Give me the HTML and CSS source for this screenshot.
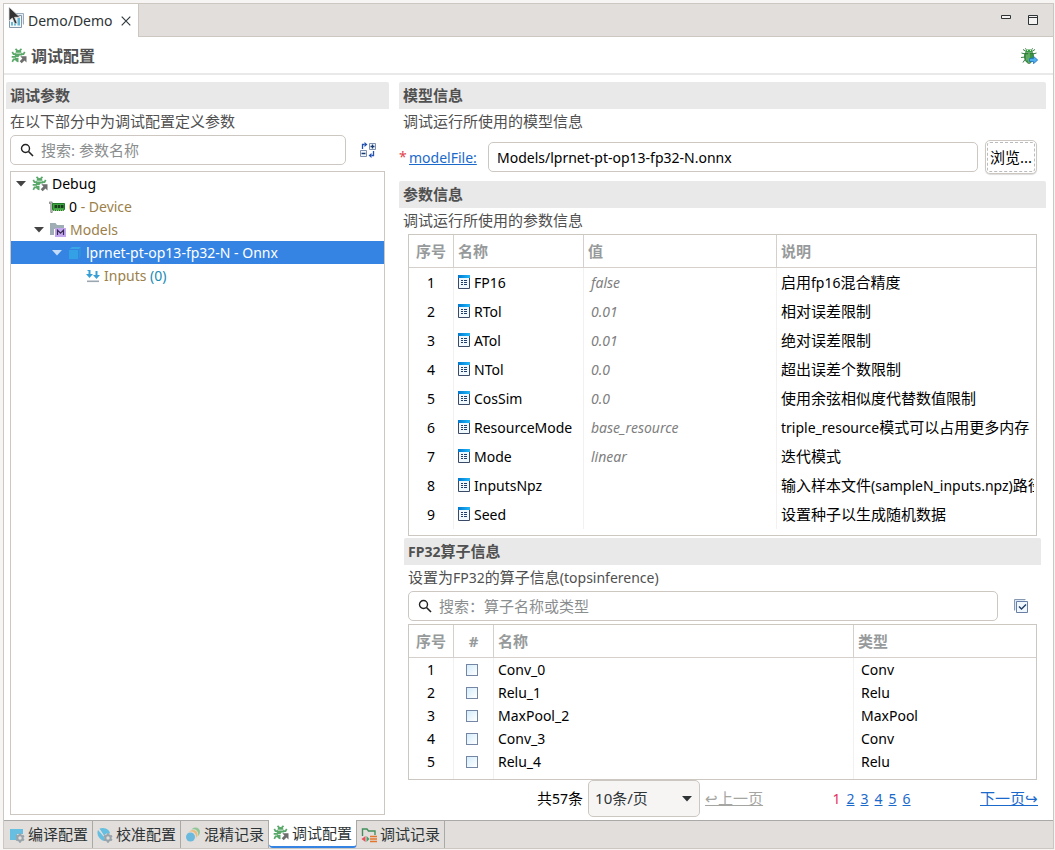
FILE: index.html
```html
<!DOCTYPE html>
<html lang="zh-CN">
<head>
<meta charset="utf-8">
<title>Demo/Demo</title>
<link rel="stylesheet" href="styles.css">
</head>
<body>
<svg class="defs" aria-hidden="true">
  <symbol id="bug" viewBox="0 0 16 16">
    <path d="M4.500 4.800C4.500 3 5.800 2 7.500 2s3 1 3 2.800z" fill="#59a869"/>
    <path d="M3.800 5.500h7.400v2H8.500L7.500 9H3.800z" fill="#59a869"/>
    <path d="M3.800 9.700h3.700v4.600C5.400 14.300 3.900 12.500 3.800 9.700z" fill="#59a869"/>
    <path d="M4.500.800l2 2M10.500.800l-2 2M1.300 3.800l1.200 2.400H5M13.700 3.800l-1.200 2.400H10M.7 8.800H5M1.300 13.800l1.200-2.400h2.500" fill="none" stroke="#59a869" stroke-width="1.700"/>
    <path d="M9.300 8.300h6.200v6.200l-2-2L10.700 15.300 8.700 13.300 11.400 10.500z" fill="#6e6e6e"/>
  </symbol>
  <symbol id="search" viewBox="0 0 14 14">
    <circle cx="5.500" cy="5.500" r="4" fill="none" stroke="#222" stroke-width="1.400"/>
    <path d="M8.500 8.500L13 13" stroke="#222" stroke-width="1.600"/>
  </symbol>
  <symbol id="down" viewBox="0 0 10 6"><path d="M0 0h10L5 5.500z" fill="currentColor"/></symbol>
  <linearGradient id="bar"><stop offset="0" stop-color="#0078d0"/><stop offset="1" stop-color="#20b8f8"/></linearGradient>
  <symbol id="prop" viewBox="0 0 12 14">
    <path d="M.5.500h11v13H.5z" fill="#eef8fd" stroke="#3a4a66"/>
    <path d="M0 0h12v3H0z" fill="url(#bar)"/>
    <path d="M3 5.500h2M6 5.500h3M3 7.500h2M6 7.500h3M3 9.500h2M6 9.500h3" stroke="#1f3d68" stroke-width="1.200"/>
  </symbol>
  <symbol id="gear" viewBox="0 0 10 10">
    <circle cx="5" cy="5" r="2.700" fill="none" stroke="#98a4ab" stroke-width="2"/>
    <path d="M5 .3v2M5 7.700v2M.9 2.700l1.700 1M7.400 6.300l1.700 1M.9 7.300l1.700-1M7.400 3.700l1.700-1" stroke="#98a4ab" stroke-width="1.800"/>
  </symbol>
</svg>

<div class="window">
  <header class="editor-tabs">
    <div class="editor-tab">
      <span class="tab-icon">
        <svg width="15" height="15" viewBox="0 0 15 15"><path d="M3.500.500h11v11" fill="#e8eef3" stroke="#9aabba"/><path d="M.5 2.500h12v12H.5z" fill="#f2f7fa" stroke="#8397a8"/><path d="M2 12.500V9h2v3.500zM5 12.500V7h2v5.500zM8.500 12.500V5h2.500v7.500z" fill="#64b7d5"/></svg>
        <svg class="pointer" width="15" height="20" viewBox="0 0 15 20"><path d="M1 1v14l3.300-3 2.600 6 2.300-1-2.600-5.700H12z" fill="#333" stroke="#ddd" stroke-width=".8"/></svg>
      </span>
      <span class="tab-name">Demo/Demo</span>
      <button class="icon-btn" aria-label="关闭"><svg width="10" height="10" viewBox="0 0 10 10"><path d="M.7.700l8.600 8.600M9.300.700L.7 9.300" stroke="#333b40" stroke-width="1.200"/></svg></button>
    </div>
    <div class="window-buttons">
      <button class="icon-btn" aria-label="最小化"><svg width="10" height="10" viewBox="0 0 10 10"><path d="M.5.500h9v3h-9z" fill="#f4f3f2" stroke="#2e3436"/></svg></button>
      <button class="icon-btn" aria-label="最大化"><svg width="10" height="10" viewBox="0 0 10 10"><path d="M.5.500h9v9h-9zM.5 2.500h9" fill="#f4f3f2" stroke="#2e3436"/></svg></button>
    </div>
  </header>

  <div class="form-head">
    <svg width="16" height="16"><use href="#bug"/></svg>
    <h1>调试配置</h1>
    <button class="icon-btn run" aria-label="调试">
      <svg width="17" height="16" viewBox="0 0 17 16"><path d="M4.500 3L2 1.500M11.500 3L14 1.500M4 6L.5 5M12 6l3.500-1M4 9L0 9.500M4 11.500L2 14.500M5 1.500L4.500.300M11 1.500l.5-1.200" stroke="#397d42" fill="none"/><path d="M5 1.500h6l1 3H4z" fill="#399a44"/><path d="M4 5h8c1 4 .5 9-4 10.500C3.500 14 3 9 4 5z" fill="#3b9444" stroke="#23672c" stroke-width=".8"/><path d="M8 5v10M6 6.500v6" stroke="#8ccb84" stroke-width=".9"/><path d="M6 2.500h1M9 2.500h1" stroke="#d8f1d2"/><path d="M8.500 10.500h4V8.300L16.700 12l-4.200 3.700v-2.200h-4z" fill="#4fb0ee" stroke="#1c72bd" stroke-width=".8"/></svg>
    </button>
  </div>

  <main class="columns">
    <section class="pane">
      <h2>调试参数</h2>
      <p class="desc">在以下部分中为调试配置定义参数</p>
      <div class="search-row tree-search">
        <label class="search-box"><svg width="14" height="14"><use href="#search"/></svg><input type="search" placeholder="搜索: 参数名称" aria-label="搜索参数名称"></label>
        <button class="icon-btn" aria-label="展开或折叠"><svg width="16" height="16" viewBox="0 0 16 16"><path d="M9.500 1.500h6v6h-6zM.5 8.500h6v6h-6z" fill="#f3f8fd" stroke="#7f8fad"/><path d="M10.500 4.500h4M12.500 2.500v4M1.500 11.500h4" stroke="#163b70" stroke-width="1.300"/><path d="M2.500 7V2.500h2M13.500 9v4.500h-2" fill="none" stroke="#2351b0" stroke-width="1.300"/><path d="M4.500 0v5L7.500 2.500zM11.500 11v5l-3-2.500z" fill="#2351b0"/></svg></button>
      </div>
      <ul class="tree en">
        <li class="lv0"><svg class="arrow" width="10" height="6"><use href="#down"/></svg><svg width="16" height="16"><use href="#bug"/></svg><span>Debug</span></li>
        <li class="lv1 leaf"><svg width="16" height="14" viewBox="0 0 16 14"><path d="M.3 2h2.900v10.500H1.800V3.500H.3z" fill="#d9d9d9" stroke="#777" stroke-width=".8"/><path d="M3.500 3.500h12v6h-1v1h-10v-1h-1z" fill="#3fa33f" stroke="#207a28"/><path d="M5.500 5h2.500v3H5.500zM8.700 5h2.600v3H8.700zM12 5h2.500v3H12z" fill="#183c1b"/><path d="M5 10.300h9" stroke="#a9d98e" stroke-dasharray="1 1"/></svg><span>0<em> - Device</em></span></li>
        <li class="lv1"><svg class="arrow" width="10" height="6"><use href="#down"/></svg><svg width="16" height="15" viewBox="0 0 16 15"><path d="M0 1h5.500l1.500 2h7v4H4v6H0z" fill="#9fadb5"/><path d="M5 6h11v9H5z" fill="#c3a7ee"/><path d="M7.500 13V8.200l3 3 3-3V13" fill="none" stroke="#3a2b55" stroke-width="1.200"/></svg><span><em>Models</em></span></li>
        <li class="lv2 selected"><svg class="arrow" width="10" height="6"><use href="#down"/></svg><svg width="14" height="14" viewBox="0 0 14 14"><path d="M1 4h9v9H1z" fill="#34a0e6"/><path d="M1.500 3L4 1h9l-2 2z" fill="#39a6e6"/><path d="M11 4l2-2.500V10l-2 2.500z" fill="#2b93dc"/></svg><span>lprnet-pt-op13-fp32-N - Onnx</span></li>
        <li class="lv3 leaf"><svg width="14" height="14" viewBox="0 0 14 14"><path d="M3.500 1v5M10.500 2v5" stroke="#389fd6" stroke-width="2"/><path d="M1.500 1.500h2" stroke="#389fd6"/><path d="M0 5h7L3.500 9zM7 6h7l-3.500 4z" fill="#389fd6"/><path d="M1 12.300h12" stroke="#9aa7b0" stroke-width="1.600"/></svg><span><em>Inputs</em> <b>(0)</b></span></li>
      </ul>
    </section>

    <section class="pane">
      <h2>模型信息</h2>
      <p class="desc">调试运行所使用的模型信息</p>
      <div class="model-row">
        <span class="required">*</span>
        <a class="en" href="#model-file" id="model-label">modelFile:</a>
        <input class="en" id="model-file" type="text" value="Models/lprnet-pt-op13-fp32-N.onnx" aria-labelledby="model-label">
        <button class="browse"><span>浏览...</span></button>
      </div>

      <h2>参数信息</h2>
      <p class="desc">调试运行所使用的参数信息</p>
      <div class="table-box params">
        <table>
          <colgroup><col class="c-index"><col class="c-name"><col class="c-value"><col></colgroup>
          <thead><tr><th>序号</th><th>名称</th><th>值</th><th>说明</th></tr></thead>
          <tbody>
            <tr><td>1</td><td><svg width="12" height="14"><use href="#prop"/></svg>FP16</td><td>false</td><td>启用<span class="en">fp16</span>混合精度</td></tr>
            <tr><td>2</td><td><svg width="12" height="14"><use href="#prop"/></svg>RTol</td><td>0.01</td><td>相对误差限制</td></tr>
            <tr><td>3</td><td><svg width="12" height="14"><use href="#prop"/></svg>ATol</td><td>0.01</td><td>绝对误差限制</td></tr>
            <tr><td>4</td><td><svg width="12" height="14"><use href="#prop"/></svg>NTol</td><td>0.0</td><td>超出误差个数限制</td></tr>
            <tr><td>5</td><td><svg width="12" height="14"><use href="#prop"/></svg>CosSim</td><td>0.0</td><td>使用余弦相似度代替数值限制</td></tr>
            <tr><td>6</td><td><svg width="12" height="14"><use href="#prop"/></svg>ResourceMode</td><td>base_resource</td><td><span class="en">triple_resource</span>模式可以占用更多内存</td></tr>
            <tr><td>7</td><td><svg width="12" height="14"><use href="#prop"/></svg>Mode</td><td>linear</td><td>迭代模式</td></tr>
            <tr><td>8</td><td><svg width="12" height="14"><use href="#prop"/></svg>InputsNpz</td><td></td><td>输入样本文件<span class="en">(sampleN_inputs.npz)</span>路径</td></tr>
            <tr><td>9</td><td><svg width="12" height="14"><use href="#prop"/></svg>Seed</td><td></td><td>设置种子以生成随机数据</td></tr>
          </tbody>
        </table>
      </div>

      <div class="operators">
        <h2><span class="en">FP32</span>算子信息</h2>
        <p class="desc">设置为<span class="en">FP32</span>的算子信息<span class="en">(topsinference)</span></p>
        <div class="search-row op-search">
          <label class="search-box"><svg width="14" height="14"><use href="#search"/></svg><input type="search" placeholder="搜索：算子名称或类型" aria-label="搜索算子"></label>
          <button class="icon-btn" aria-label="全选"><svg width="14" height="14" viewBox="0 0 14 14"><path d="M.5 11.500V.500h11" fill="none" stroke="#8798b3"/><path d="M1 1h10v10H1z" fill="#dbe8f5"/><path d="M2.500 2.500h11v11h-11z" fill="#f0f7fd" stroke="#6a7fa3"/><path d="M5 7.500l2.500 2.500L12 5.500" fill="none" stroke="#223f66" stroke-width="1.400"/></svg></button>
        </div>
        <div class="table-box ops">
          <table>
            <colgroup><col class="c-index"><col class="c-check"><col><col class="c-type"></colgroup>
            <thead><tr><th>序号</th><th>#</th><th>名称</th><th>类型</th></tr></thead>
            <tbody>
              <tr><td>1</td><td><input type="checkbox" aria-label="Conv_0"></td><td>Conv_0</td><td>Conv</td></tr>
              <tr><td>2</td><td><input type="checkbox" aria-label="Relu_1"></td><td>Relu_1</td><td>Relu</td></tr>
              <tr><td>3</td><td><input type="checkbox" aria-label="MaxPool_2"></td><td>MaxPool_2</td><td>MaxPool</td></tr>
              <tr><td>4</td><td><input type="checkbox" aria-label="Conv_3"></td><td>Conv_3</td><td>Conv</td></tr>
              <tr><td>5</td><td><input type="checkbox" aria-label="Relu_4"></td><td>Relu_4</td><td>Relu</td></tr>
              <tr><td></td><td><input type="checkbox" aria-label="选择"></td><td></td><td></td></tr>
            </tbody>
          </table>
        </div>
        <nav class="pager" aria-label="分页">
          <div class="pager-size">
            <span>共<span class="en">57</span>条</span>
            <span class="select"><select aria-label="每页条数"><option>10条/页</option></select><svg width="10" height="6"><use href="#down"/></svg></span>
            <a class="disabled" href="#prev">↩上一页</a>
          </div>
          <div class="pages en"><span class="current">1</span><a href="#2">2</a><a href="#3">3</a><a href="#4">4</a><a href="#5">5</a><a href="#6">6</a></div>
          <a href="#next">下一页↪</a>
        </nav>
      </div>
    </section>
  </main>

  <nav class="bottom-tabs">
    <button><svg width="16" height="16" viewBox="0 0 16 16"><path d="M1 2h13v5H8v6H1z" fill="#66bfe0"/><use href="#gear" x="6" y="6" width="10" height="10"/></svg>编译配置</button>
    <button><svg width="16" height="16" viewBox="0 0 16 16"><path d="M2.500 1.500C8-.500 13 3 13 6.500H9.500L7 8.500z" fill="#66bfe0"/><path d="M1 3l6.500 7.500L8 14C3 13.500-1 8 1 3z" fill="#66bfe0"/><use href="#gear" x="6" y="6" width="10" height="10"/></svg>校准配置</button>
    <button><svg width="16" height="16" viewBox="0 0 16 16"><circle cx="10.500" cy="5" r="4.500" fill="#8fc796"/><circle cx="8.500" cy="7" r="4.700" fill="#e1dedb"/><circle cx="8" cy="7.500" r="4.500" fill="#e9bd7e"/><circle cx="6" cy="9.500" r="5" fill="#e1dedb"/><circle cx="5.500" cy="10" r="4.500" fill="#6bb9dc"/></svg>混精记录</button>
    <button class="active" aria-current="page"><svg width="16" height="16"><use href="#bug"/></svg>调试配置</button>
    <button><svg width="16" height="16" viewBox="0 0 16 16"><path d="M1.500 9V2h4.500l1.500 2h6.500v4" fill="none" stroke="#43905c" stroke-width="1.400"/><path d="M4.500 9v6L.5 12z" fill="#e8505b"/><path d="M5.500 9v6L8.500 12z" fill="#45a069"/><path d="M9 9.500h7M9 12h7M9 14.500h7" stroke="#e2762f" stroke-width="1.400"/></svg>调试记录</button>
  </nav>
</div>
</body>
</html>
```
FILE: styles.css
```css
* { box-sizing: border-box; }

body {
  margin: 0;
  height: 100vh;
  padding: 3px 1px 1px 3px;
  background: #f6f5f4;
  color: #000;
  font: 15px/23px "Noto Sans", "Noto Sans CJK SC", sans-serif;
}

.defs { position: absolute; width: 0; height: 0; }
svg { flex: none; }
h1, h2, p, ul { margin: 0; padding: 0; }
button, input, select { font: inherit; color: inherit; }
a { color: #1b6acb; }
.en { font-size: 14px; }

.icon-btn {
  display: flex;
  padding: 0;
  border: 0;
  background: none;
}

.window {
  display: flex;
  flex-direction: column;
  height: 100%;
  border: 1px solid #cdc7c2;
  background: #fff;
}

/* Editor tab strip */
.editor-tabs {
  display: flex;
  justify-content: space-between;
  height: 33px;
  background: #e1dedb;
  border-bottom: 1px solid #cdc7c2;
}
.editor-tab {
  display: flex;
  align-items: center;
  gap: 4px;
  height: 33px;
  padding: 0 7px 0 5px;
  border-right: 1px solid #cdc7c2;
  background: #fff;
  color: #2e3436;
}
.tab-name { font-size: 14px; margin-right: 4px; }
.tab-icon { position: relative; display: flex; }
.pointer { position: absolute; left: -1px; top: -7px; }
.window-buttons {
  display: flex;
  gap: 17px;
  padding: 11px 15px 0 0;
}

/* Form heading */
.form-head {
  display: flex;
  align-items: center;
  gap: 4px;
  height: 38px;
  padding: 1px 15px 0 7px;
  border-bottom: 2px solid #e9e9e9;
}
h1 { font-size: 16px; line-height: 24px; color: #505050; }
.run { margin-left: auto; }

.columns {
  flex: 1;
  min-height: 0;
  display: grid;
  grid-template-columns: minmax(0, 383fr) minmax(0, 647fr);
  gap: 10px;
  padding: 7px 7px 3px 2px;
}
.pane {
  display: flex;
  flex-direction: column;
  min-height: 0;
}
h2 {
  flex: none;
  height: 27px;
  padding-left: 4px;
  border-radius: 2px 2px 0 0;
  background: #e9e9e9;
  color: #505050;
  font-size: 15px;
  line-height: 27px;
}
.desc {
  flex: none;
  height: 25px;
  padding-left: 4px;
  color: #505050;
  line-height: 25px;
}

/* Search fields */
.search-row {
  display: flex;
  align-items: center;
}
.search-box {
  flex: 1;
  display: flex;
  align-items: center;
  gap: 7px;
  height: 30px;
  padding: 0 9px;
  border: 1px solid #cdc7c2;
  border-radius: 5px;
}
.search-box input {
  flex: 1;
  min-width: 0;
  padding: 0;
  border: 0;
  outline: 0;
  background: none;
}
.search-box input::placeholder { color: #8b8e8f; }
.tree-search { gap: 14px; padding: 1px 13px 6px 4px; }
.op-search { gap: 16px; padding: 1px 13px 3px 4px; }

/* Parameter tree */
.tree {
  flex: 1;
  margin: 0 4px 2px;
  border: 1px solid #cdc7c2;
  list-style: none;
}
.tree li {
  display: flex;
  align-items: center;
  gap: 4px;
  height: 23px;
}
.tree .arrow { margin-right: 2px; color: #444; }
.tree em { font-style: normal; color: #9c7f4a; }
.tree b { font-weight: 400; color: #1a8bb5; }
.lv0 { padding-left: 5px; }
.lv1 { padding-left: 23px; }
.lv2 { padding-left: 41px; }
.lv1.leaf { padding-left: 38px; }
.lv3.leaf { padding-left: 75px; }
.tree .selected { background: #3584e4; color: #fff; }
.tree .selected .arrow { color: #c4dcf7; }

/* Model file row */
.model-row {
  display: flex;
  align-items: center;
  padding: 6px 9px 7px 0;
}
.required { width: 10px; color: #e0444e; font-size: 14px; line-height: 16px; }
.model-row a { width: 72px; }
.model-row input {
  flex: 1;
  min-width: 0;
  height: 30px;
  margin: 0 7px;
  padding: 0 8px;
  border: 1px solid #cdc7c2;
  border-radius: 5px;
  background: #fff;
}
.browse {
  width: 52px;
  height: 34px;
  padding: 1px;
  border: 1px solid #cdc7c2;
  border-radius: 5px;
  background: #fff;
  box-shadow: 0 1px 1px #ddd;
}
.browse span {
  display: block;
  border: 1px dashed #bbb;
  border-radius: 3px;
  line-height: 28px;
  white-space: nowrap;
}

/* Tables */
.table-box {
  border: 1px solid #cdc7c2;
  overflow: hidden;
}
table {
  width: 100%;
  table-layout: fixed;
  border-collapse: separate;
  border-spacing: 0;
}
.c-index { width: 45px; }
.c-name { width: 130px; }
.c-value { width: 193px; }
.c-check { width: 40px; }
.c-type { width: 182px; }
th {
  height: 33px;
  padding: 0 4px;
  border-right: 1px solid #d5d0cc;
  border-bottom: 1px solid #d5d0cc;
  color: #979a9b;
  text-align: left;
}
td {
  padding: 0 4px;
  border-right: 1px solid #f1f1f1;
  font-size: 14px;
  white-space: nowrap;
  overflow: hidden;
}
th:last-child { border-right: 0; }
td:last-child { border-right: 2px solid #fff; }
th:first-child, td:first-child { text-align: center; }
.params { margin: 1px 9px 2px; padding-bottom: 6px; }
.params td { height: 29px; }
.params td svg { margin-right: 4px; vertical-align: -1px; }
.params td:nth-child(3) { padding-left: 7px; color: #808080; font-style: italic; }
.params td:last-child { font-size: 15px; padding-right: 0; }

/* Operator section */
.operators {
  flex: 1;
  min-height: 0;
  display: flex;
  flex-direction: column;
  margin: 0 5px;
}
.ops {
  flex: 1;
  min-height: 0;
  margin: 0 4px;
}
.ops td { height: 23px; }
.ops th:nth-child(2) { text-align: center; }
.ops td:nth-child(2) { padding: 0 14px 0 12px; }
.ops td:last-child { padding-left: 7px; }
.ops input {
  appearance: none;
  display: block;
  width: 12px;
  height: 12px;
  margin: 0;
  border: 1px solid #7586a5;
  background: linear-gradient(135deg, #d4edfa, #fff);
}

/* Pagination */
.pager {
  display: flex;
  align-items: center;
  justify-content: space-between;
  height: 37px;
  margin: 0 3px 0 133px;
}
.pager-size { display: flex; align-items: center; gap: 5px; }
.select {
  display: grid;
  align-items: center;
  width: 112px;
}
.select select {
  grid-area: 1 / 1;
  appearance: none;
  height: 37px;
  padding: 0 6px;
  border: 1px solid #cdc7c2;
  border-radius: 5px;
  background: #f6f5f4;
  color: #2e3436;
}
.select svg {
  grid-area: 1 / 1;
  justify-self: end;
  margin-right: 8px;
  color: #2e3436;
  pointer-events: none;
}
.disabled { color: #a5a5a1; }
.pages { display: flex; gap: 6px; }
.current { color: #e8305a; }

/* Page tabs */
.bottom-tabs {
  display: flex;
  height: 28px;
  padding-left: 1px;
  border-top: 1px solid #aaa9a8;
  background: #e1dedb;
}
.bottom-tabs button {
  display: flex;
  align-items: center;
  gap: 3px;
  width: 88px;
  padding: 0 4px;
  border: 0;
  border-right: 1px solid #aaa9a8;
  background: none;
  color: #2e3436;
  white-space: nowrap;
}
.bottom-tabs .active {
  margin-top: -1px;
  border-bottom: 2px solid #3584e4;
  border-radius: 0 0 4px 4px;
  background: #fff;
}
```
